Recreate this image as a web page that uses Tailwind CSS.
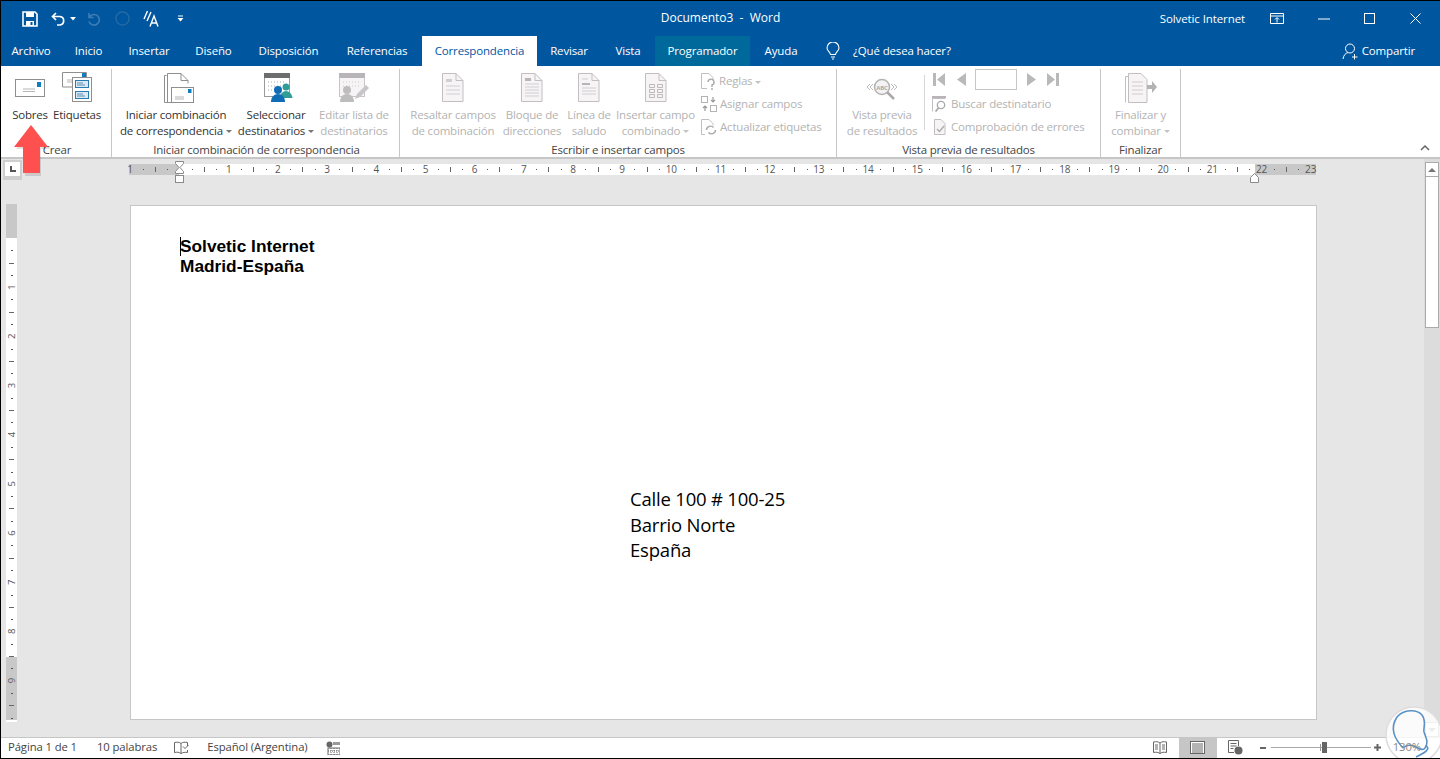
<!DOCTYPE html>
<html lang="es">
<head>
<meta charset="utf-8">
<title>Documento3 - Word</title>
<script src="https://cdn.jsdelivr.net/npm/@tailwindcss/browser@4"></script>
</head>
<body class="overflow-hidden">
<div class="relative w-[1440px] h-[759px] overflow-hidden flex flex-col bg-[#e6e6e6] border-t border-b border-l border-black font-['Open_Sans','Noto_Sans',sans-serif] text-[11.5px] tracking-[-0.2px] text-[#333]">

  <!-- title bar -->
  <header class="h-[35px] shrink-0 bg-[#00569f] text-white grid grid-cols-[1fr_auto_1fr] items-center">
    <div class="flex items-center pl-[21px]">
      <svg width="16" height="16" viewBox="0 0 16 16" class="mr-[13px]"><path d="M1 1h12l2 2v12H1z" fill="none" stroke="#fff" stroke-width="1.6"/><rect x="4" y="1" width="8" height="5" fill="#fff"/><rect x="4" y="10" width="8" height="5" fill="#fff"/><rect x="8.5" y="11" width="2" height="3" fill="#00569f"/></svg>
      <svg width="16" height="14" viewBox="0 0 16 14" class="mr-[3px]"><path d="M5 1L1.5 4.5 5 8M2 4.5h7a4.3 4.3 0 0 1 0 8.5H6" fill="none" stroke="#fff" stroke-width="1.7"/></svg>
      <svg width="6" height="4" viewBox="0 0 6 4" class="mr-[10px]"><path d="M0 0h6L3 3.5z" fill="#fff"/></svg>
      <svg width="14" height="14" viewBox="0 0 14 14" class="mr-[15px]"><path d="M3 1v4.5h4.5M3.500 5A5.300 5.300 0 1 1 3 9.500" fill="none" stroke="#3d7db3" stroke-width="1.6"/></svg>
      <svg width="15" height="15" viewBox="0 0 15 15" class="mr-[13px]"><circle cx="7.5" cy="7.5" r="6.6" fill="none" stroke="#2a6ea6" stroke-width="1.2"/></svg>
      <svg width="16" height="17" viewBox="0 0 16 17" class="mr-[18px]"><path d="M1 9L4.500 1M4 11L8 2M7 16.500L11 6l4 10.500M8.500 13h5" fill="none" stroke="#fff" stroke-width="1.4"/></svg>
      <svg width="7" height="7" viewBox="0 0 7 7"><path d="M1 1h5" stroke="#fff"/><path d="M0.5 3h6L3.5 6.5z" fill="#fff"/></svg>
    </div>
    <div class="text-[12px] tracking-normal pb-[2px]">Documento3 &nbsp;-&nbsp; Word</div>
    <div class="flex items-center justify-end">
      <span class="text-[11.5px] mr-[25px] tracking-[-0.1px]">Solvetic Internet</span>
      <svg width="15" height="12" viewBox="0 0 15 12" class="mr-[33px]"><path d="M.5.5h13v10H.5zM.5 3h13" fill="none" stroke="#fff"/><path d="M7 9.500V5M5 6.500L7 4.500 9 6.500" fill="none" stroke="#fff"/></svg>
      <svg width="12" height="2" viewBox="0 0 12 2" class="mr-[34px]"><path d="M0 1h12" stroke="#fff"/></svg>
      <svg width="11" height="11" viewBox="0 0 11 11" class="mr-[35px]"><rect x=".5" y=".5" width="10" height="10" fill="none" stroke="#fff"/></svg>
      <svg width="11" height="11" viewBox="0 0 11 11" class="mr-[19px]"><path d="M.5.5l10 10M10.500.5l-10 10" stroke="#fff"/></svg>
    </div>
  </header>

  <!-- tabs -->
  <nav class="h-[30px] shrink-0 bg-[#00569f] text-white flex items-center text-[11.5px] tracking-[-0.15px]">
    <div class="w-[60px] text-center">Archivo</div>
    <div class="w-[55px] text-center">Inicio</div>
    <div class="w-[66px] text-center">Insertar</div>
    <div class="w-[63px] text-center">Diseño</div>
    <div class="w-[87px] text-center">Disposición</div>
    <div class="w-[90px] text-center">Referencias</div>
    <div class="w-[115px] h-full flex items-center justify-center bg-white text-[#00569f]">Correspondencia</div>
    <div class="w-[64px] text-center">Revisar</div>
    <div class="w-[54px] text-center">Vista</div>
    <div class="w-[95px] h-full flex items-center justify-center bg-[#00699b]">Programador</div>
    <div class="w-[62px] text-center">Ayuda</div>
    <svg width="14" height="18" viewBox="0 0 14 18" class="ml-[14px] mr-[13px]"><path d="M4.500 12.500C4 9.500 1 9 1 6a6 6 0 0 1 12 0c0 3-3 3.500-3.500 6.500zM5 15h4M6 17h2" fill="none" stroke="#fff" stroke-width="1.100"/></svg>
    <div>¿Qué desea hacer?</div>
    <div class="flex-1"></div>
    <svg width="17" height="17" viewBox="0 0 17 17" class="mr-[3px]"><circle cx="8" cy="5.500" r="4.500" fill="none" stroke="#fff"/><path d="M1 16c.5-3.500 2.500-6 5-6.500M12.500 11v5.500M10 14h5.500" fill="none" stroke="#fff"/></svg>
    <div class="mr-[25px]">Compartir</div>
  </nav>

  <!-- ribbon -->
  <section class="relative h-[93px] shrink-0 bg-white border-b-2 border-[#c6c6c6] flex pt-[3px]">
    <!-- Crear -->
    <div class="w-[111px] shrink-0 flex flex-col border-r border-[#c6c6c6]">
      <div class="flex-1 flex pl-[6px]">
        <div class="w-[46px] flex flex-col items-center">
          <div class="h-[38px] flex items-start justify-center">
            <svg width="30" height="18" viewBox="0 0 30 18" class="mt-[10px]"><rect x=".5" y=".5" width="29" height="17" fill="#fff" stroke="#8f8f8f"/><rect x="22" y="3" width="4" height="5" fill="#0f7ebd"/><path d="M8 10h12M8 12.500h12" stroke="#b5b5b5"/></svg>
          </div>
          <div class="leading-[16px] text-center">Sobres</div>
        </div>
        <div class="w-[48px] flex flex-col items-center">
          <div class="h-[38px] flex items-start justify-center">
            <svg width="31" height="30" viewBox="0 0 31 30" class="mt-[3px]"><path d="M.5 15V.5h24V5" fill="#fff" stroke="#8f8f8f"/><rect x="20" y="1" width="4" height="4" fill="#0f7ebd"/><path d="M5 8h7M5 10h7" stroke="#b5b5b5"/><path d="M.5 15H10" stroke="#8f8f8f"/><rect x="10.500" y="5.500" width="19" height="24" fill="#fff" stroke="#8f8f8f"/><rect x="13.500" y="8.500" width="13" height="7" fill="#dbeaf4" stroke="#2a7bb0"/><rect x="13.500" y="19.500" width="13" height="7" fill="#dbeaf4" stroke="#2a7bb0"/><path d="M15 11h6M15 13h8M15 22h6M15 24h8" stroke="#5b8fb0"/></svg>
          </div>
          <div class="leading-[16px] text-center">Etiquetas</div>
        </div>
      </div>
      <div class="h-[15px] leading-[15px] text-center pl-[2px] text-[#444]">Crear</div>
    </div>
    <!-- Iniciar combinación -->
    <div class="w-[288px] shrink-0 flex flex-col border-r border-[#c6c6c6]">
      <div class="flex-1 flex pl-[4px]">
        <div class="w-[120px] flex flex-col items-center">
          <div class="h-[38px] flex items-start justify-center pl-[6px]">
            <svg width="30" height="31" viewBox="0 0 30 31" class="mt-[4px]"><path d="M.5 29.500V2.500h2M3.500 29.500V.5H17l7 7v3" fill="#fff" stroke="#8f8f8f"/><path d="M17 .5v7h7" fill="none" stroke="#8f8f8f"/><path d="M.5 29.500h7" stroke="#8f8f8f"/><rect x="7.500" y="14.500" width="22" height="15" fill="#fff" stroke="#8f8f8f"/><rect x="24" y="16" width="3.500" height="4" fill="#0f7ebd"/><path d="M11 24h9M11 26h9" stroke="#b5b5b5"/></svg>
          </div>
          <div class="leading-[16px] text-center">Iniciar combinación<br>de correspondencia<span class="inline-block align-middle ml-[3px] w-0 h-0 border-x-[3px] border-x-transparent border-t-[3px] border-t-[#777]"></span></div>
        </div>
        <div class="w-[80px] flex flex-col items-center">
          <div class="h-[38px] flex items-start justify-center pl-[5px]">
            <svg width="30" height="30" viewBox="0 0 30 30" class="mt-[4px]"><rect x=".5" y=".5" width="25" height="23" fill="#fff" stroke="#9a9a9a"/><rect y="0" width="26" height="5" fill="#6d6d6d"/><path d="M4 9h18M4 13h18M4 17h12" stroke="#aaa" stroke-dasharray="1 2"/><circle cx="22" cy="14" r="3.500" fill="#2f9c95"/><path d="M16 25c0-4 3-7 6-7s6 3 6.500 7z" fill="#2f9c95"/><circle cx="14" cy="17" r="4" fill="#0f6cb5"/><path d="M7 29c0-5 3-8 7-8s7 3 7 8z" fill="#0f6cb5"/></svg>
          </div>
          <div class="leading-[16px] text-center">Seleccionar<br>destinatarios<span class="inline-block align-middle ml-[3px] w-0 h-0 border-x-[3px] border-x-transparent border-t-[3px] border-t-[#777]"></span></div>
        </div>
        <div class="w-[76px] flex flex-col items-center text-[#b3b3b3]">
          <div class="h-[38px] flex items-start justify-center">
            <svg width="30" height="30" viewBox="0 0 30 30" class="mt-[4px]"><rect x=".5" y=".5" width="25" height="23" fill="#f7f4f6" stroke="#c9c4c8"/><rect width="26" height="5" fill="#b9b4b8"/><path d="M4 9h18M4 13h18" stroke="#ccc" stroke-dasharray="1 2"/><circle cx="8" cy="17" r="4" fill="#bdbdbd"/><path d="M1 29c0-5 3-8 7-8s7 3 7 8z" fill="#bdbdbd"/><path d="M16 26l2-5 9-9 3 3-9 9z" fill="#c9c4c8"/></svg>
          </div>
          <div class="leading-[16px] text-center">Editar lista de<br>destinatarios</div>
        </div>
      </div>
      <div class="h-[15px] leading-[15px] text-center pl-[2px] text-[#444]">Iniciar combinación de correspondencia</div>
    </div>
    <!-- Escribir e insertar -->
    <div class="w-[437px] shrink-0 flex flex-col border-r border-[#c6c6c6]">
      <div class="flex-1 flex pl-[4px] text-[#b3b3b3]">
        <div class="w-[98px] flex flex-col items-center">
          <div class="h-[38px] flex items-start justify-center">
            <svg width="22" height="29" viewBox="0 0 22 29" class="mt-[4px]"><path d="M.5.5H14l7 7v21H.5z" fill="#f7f4f6" stroke="#c3bec2"/><path d="M14 .5v7h7" fill="none" stroke="#c3bec2"/><path d="M4 6h6v3H4z" fill="#d2cdd1"/><path d="M4 13h14M4 17h14M4 21h14" stroke="#d2cdd1"/></svg>
          </div>
          <div class="leading-[16px] text-center">Resaltar campos<br>de combinación</div>
        </div>
        <div class="w-[60px] flex flex-col items-center">
          <div class="h-[38px] flex items-start justify-center">
            <svg width="22" height="29" viewBox="0 0 22 29" class="mt-[4px]"><path d="M.5.5H14l7 7v21H.5z" fill="#f7f4f6" stroke="#c3bec2"/><path d="M14 .5v7h7" fill="none" stroke="#c3bec2"/><path d="M4 5h6v3H4z" fill="#b9b4b8"/><path d="M4 11h14M4 14h14M4 17h14M4 20h14M4 23h14" stroke="#d2cdd1"/></svg>
          </div>
          <div class="leading-[16px] text-center">Bloque de<br>direcciones</div>
        </div>
        <div class="w-[54px] flex flex-col items-center">
          <div class="h-[38px] flex items-start justify-center">
            <svg width="22" height="29" viewBox="0 0 22 29" class="mt-[4px]"><path d="M.5.5H14l7 7v21H.5z" fill="#f7f4f6" stroke="#c3bec2"/><path d="M14 .5v7h7" fill="none" stroke="#c3bec2"/><path d="M4 10h8v2H4z" fill="#b9b4b8"/><path d="M4 6h6M4 15h14M4 18h14M4 21h14" stroke="#d2cdd1"/></svg>
          </div>
          <div class="leading-[16px] text-center">Línea de<br>saludo</div>
        </div>
        <div class="w-[79px] flex flex-col items-center">
          <div class="h-[38px] flex items-start justify-center">
            <svg width="22" height="29" viewBox="0 0 22 29" class="mt-[4px]"><path d="M.5.5H14l7 7v21H.5z" fill="#f7f4f6" stroke="#c3bec2"/><path d="M14 .5v7h7" fill="none" stroke="#c3bec2"/><path d="M4.500 11.500h5v3h-5zM12.500 11.500h5v3h-5zM4.500 16.500h5v3h-5zM12.500 16.500h5v3h-5zM4.500 21.500h5v3h-5zM12.500 21.500h5v3h-5z" fill="none" stroke="#bdb8bc"/></svg>
          </div>
          <div class="leading-[16px] text-center">Insertar campo<br>combinado<span class="inline-block align-middle ml-[3px] w-0 h-0 border-x-[3px] border-x-transparent border-t-[3px] border-t-[#c3c3c3]"></span></div>
        </div>
        <div class="flex flex-col pl-[6px] pt-[2px] gap-[3px]">
          <div class="h-[20px] flex items-center gap-[3px]">
            <svg width="15" height="17" viewBox="0 0 15 17"><path d="M.5.5H8l4 4v3M.5.5v15H6" fill="none" stroke="#c3bec2"/><path d="M7 9a3 3 0 1 1 4 3v2M11 15v2" fill="none" stroke="#aaa" stroke-width="1.400"/></svg>
            <span>Reglas<span class="inline-block align-middle ml-[3px] w-0 h-0 border-x-[3px] border-x-transparent border-t-[3px] border-t-[#c3c3c3]"></span></span>
          </div>
          <div class="h-[20px] flex items-center gap-[3px]">
            <svg width="16" height="16" viewBox="0 0 16 16"><rect x=".5" y=".5" width="6" height="6" fill="none" stroke="#b3b3b3"/><rect x="9.500" y="9.500" width="6" height="6" fill="none" stroke="#b3b3b3"/><path d="M12 1v5M10 4l2 2 2-2M4 15V10M2 12l2-2 2 2" fill="none" stroke="#9a9a9a" stroke-width="1.200"/></svg>
            <span>Asignar campos</span>
          </div>
          <div class="h-[20px] flex items-center gap-[3px]">
            <svg width="16" height="16" viewBox="0 0 16 16"><path d="M.5 15.500V.5H8l4 4v2M.5 15.500H4" fill="none" stroke="#c3bec2"/><path d="M5.500 11a4 4 0 0 1 7-2.500M14.500 11a4 4 0 0 1-7 2.500" fill="none" stroke="#aaa" stroke-width="1.400"/></svg>
            <span>Actualizar etiquetas</span>
          </div>
        </div>
      </div>
      <div class="h-[15px] leading-[15px] text-center text-[#444]">Escribir e insertar campos</div>
    </div>
    <!-- Vista previa -->
    <div class="w-[264px] shrink-0 flex flex-col border-r border-[#c6c6c6]">
      <div class="flex-1 flex pl-[3px] text-[#b3b3b3]">
        <div class="w-[84px] flex flex-col items-center">
          <div class="h-[38px] flex items-start justify-center">
            <svg width="32" height="24" viewBox="0 0 32 24" class="mt-[9px]"><circle cx="16" cy="9" r="7.500" fill="#f4f2f3" stroke="#b3b3b3" stroke-width="1.500"/><path d="M21 14l7 7" stroke="#aaa" stroke-width="2.500"/><path d="M4 6L1 9l3 3M7 6L4 9l3 3M25 6l3 3-3 3M28 6l3 3-3 3" fill="none" stroke="#bbb"/><text x="16" y="11.500" text-anchor="middle" font-size="6" font-weight="700" fill="#aaa">ABC</text></svg>
          </div>
          <div class="leading-[16px] text-center">Vista previa<br>de resultados</div>
        </div>
        <div class="w-px h-[55px] mt-[6px] bg-[#d8d8d8]"></div>
        <div class="flex flex-col pl-[6px] gap-[3px]">
          <div class="h-[21px] flex items-center">
            <svg width="128" height="21" viewBox="0 0 128 21"><path d="M2 4h3v13H2zM14 4v13L6 10.500z" fill="#b9b9b9"/><path d="M35 4v13l-9-6.500zM96 4v13l9-6.500zM116 4v13l8-6.500zM125 4h3v13h-3z" fill="#b9b9b9"/><rect x="44.500" y=".5" width="41" height="20" fill="#fff" stroke="#c6c6c6"/></svg>
          </div>
          <div class="h-[20px] mt-[1px] pl-[1px] flex items-center gap-[3px]">
            <svg width="16" height="16" viewBox="0 0 16 16"><path d="M.5 2.500h13M.5 2.500v13" stroke="#c3bec2" fill="none"/><path d="M0 0h14v2H0z" fill="#b9b4b8"/><circle cx="9" cy="9" r="3.700" fill="none" stroke="#a9a9a9" stroke-width="1.300"/><path d="M6.500 12l-3 3.500" stroke="#a9a9a9" stroke-width="1.800"/></svg>
            <span>Buscar destinatario</span>
          </div>
          <div class="h-[20px] pl-[1px] flex items-center gap-[3px]">
            <svg width="16" height="16" viewBox="0 0 16 16"><path d="M2.500 15.500V.5H9l4 4v11z" fill="#f7f4f6" stroke="#c3bec2"/><path d="M5 10l2.500 2.500L12 7" fill="none" stroke="#aaa" stroke-width="1.300"/></svg>
            <span>Comprobación de errores</span>
          </div>
        </div>
      </div>
      <div class="h-[15px] leading-[15px] text-center text-[#444]">Vista previa de resultados</div>
    </div>
    <!-- Finalizar -->
    <div class="w-[80px] shrink-0 flex flex-col border-r border-[#c6c6c6]">
      <div class="flex-1 flex text-[#b3b3b3]">
        <div class="w-full flex flex-col items-center">
          <div class="h-[38px] flex items-start justify-center">
            <svg width="32" height="30" viewBox="0 0 32 30" class="mt-[4px]"><path d="M.5 29.500V3.500h3" fill="none" stroke="#c3bec2"/><path d="M3.500 29.500V.5H16l6 6v23z" fill="#f7f4f6" stroke="#c3bec2"/><path d="M7 9h11M7 13h11M7 17h11M7 21h11" stroke="#cfcacd"/><path d="M22 12h5V8l5 6-5 6v-4h-5z" fill="#b3b3b3"/></svg>
          </div>
          <div class="leading-[16px] text-center">Finalizar y<br>combinar<span class="inline-block align-middle ml-[3px] w-0 h-0 border-x-[3px] border-x-transparent border-t-[3px] border-t-[#c3c3c3]"></span></div>
        </div>
      </div>
      <div class="h-[15px] leading-[15px] text-center text-[#444]">Finalizar</div>
    </div>
    <svg width="10" height="6" viewBox="0 0 10 6" class="absolute left-[1419px] top-[79px]"><path d="M1 5l4-4 4 4" fill="none" stroke="#666" stroke-width="1.500"/></svg>
  </section>

  <!-- work area -->
  <main class="flex-1 min-h-0 flex">
    <div class="w-[1422px] shrink-0 flex flex-col">
      <div class="h-[46px] shrink-0 flex items-start">
        <div class="w-[19px] h-[20px] ml-[2px] mt-[1px] bg-[#cfcfcf] flex items-start justify-center">
          <div class="w-[15px] h-[14px] mt-[2px] bg-white flex items-center justify-center">
            <div class="w-[6px] h-[6px] border-l-2 border-b-2 border-[#555]"></div>
          </div>
        </div>
        <svg id="hr" width="1195" height="30" viewBox="125 159 1195 30" class="ml-[103px] overflow-visible font-['Open_Sans',sans-serif]"></svg>
      </div>
      <div class="flex-1 min-h-0 flex items-start">
        <svg id="vr" width="13" height="520" viewBox="5 204 13 520" class="ml-[4px] mt-[-1px] shrink-0"></svg>
        <article class="relative ml-[112px] w-[1187px] h-[515px] bg-white border border-[#c6c6c6] text-black tracking-normal">
          <div class="absolute left-[49px] top-[31px] w-px h-[19px] bg-black"></div>
          <div class="pl-[49px] pt-[30px] font-['Liberation_Sans',sans-serif] font-bold text-[17.3px] leading-[20px]">
            <div>Solvetic Internet</div>
            <div>Madrid-España</div>
          </div>
          <div class="pl-[499px] pt-[210px] text-[18.5px] leading-[25.5px] font-['Open_Sans',sans-serif] tracking-[-0.2px]">
            <div>Calle 100 # 100-25</div>
            <div>Barrio Norte</div>
            <div>España</div>
          </div>
        </article>
      </div>
    </div>
    <div class="w-[17px] shrink-0 bg-[#dcdcdc] border-l border-[#e6e6e6] flex flex-col items-stretch pt-[3px] px-px">
      <div class="h-[15px] bg-white border border-[#ababab] flex items-center justify-center shrink-0">
        <div class="w-0 h-0 border-x-[4px] border-x-transparent border-b-[4px] border-b-[#777]"></div>
      </div>
      <div class="h-[152px] mt-[-1px] bg-white border border-[#ababab] shrink-0"></div>
      <div class="flex-1"></div>
      <div class="h-[15px] bg-white border border-[#ababab] flex items-center justify-center shrink-0">
        <div class="w-0 h-0 border-x-[4px] border-x-transparent border-t-[4px] border-t-[#999]"></div>
      </div>
    </div>
  </main>

  <!-- status bar -->
  <footer class="h-[21px] shrink-0 bg-white border-t border-[#c6c6c6] flex items-center text-[#444] text-[11.3px] tracking-[-0.1px] pb-[1px]">
    <span class="ml-[7px]">Página 1 de 1</span>
    <span class="ml-[20px]">10 palabras</span>
    <svg width="15" height="14" viewBox="0 0 15 14" class="ml-[17px]"><path d="M7 2.500C5.500 1 3 1 .5 1.500v10c2.500-.5 4.500-.5 6.500 1M7 2.500v10M7 2.500C8.500 1 11 1 13.500 1.500V5M7 12.500c1.500-1 4-1.500 6.500-1V9" fill="none" stroke="#666"/><path d="M9 5.500l2 2L14.500 4" fill="none" stroke="#666"/></svg>
    <span class="ml-[18px] mr-[-1px]">Español (Argentina)</span>
    <svg width="14" height="14" viewBox="0 0 14 14" class="ml-[19px]"><circle cx="3.500" cy="3.500" r="3" fill="#666"/><rect x="7" y="1" width="7" height="3" fill="#999"/><rect x="2" y="7" width="12" height="7" fill="none" stroke="#666"/><path d="M2 10h12M5 7v7M8 7v7M11 7v7" stroke="#666" stroke-dasharray="1 1"/></svg>
    <div class="flex-1"></div>
    <svg width="14" height="13" viewBox="0 0 14 13" class="mr-[12px]"><path d="M7 2C5 .5 3 .5.500 1v10.500C3 11 5 11 7 12.500 9 11 11 11 13.500 11.500V1C11 .5 9 .5 7 2zM7 2v10.500M2 4h3M2 6h3M2 8h3M9 4h3M9 6h3M9 8h3" fill="none" stroke="#666"/></svg>
    <div class="w-[38px] h-[21px] bg-[#c6c6c6] flex items-center justify-center">
      <svg width="15" height="13" viewBox="0 0 15 13"><rect x=".5" y=".5" width="14" height="12" fill="#fff" stroke="#666"/><path d="M2 3h11M2 5h11M2 7h11M2 9h11M2 11h11" stroke="#666"/></svg>
    </div>
    <svg width="15" height="15" viewBox="0 0 15 15" class="ml-[11px]"><path d="M10.500 6V.5H.5v12H6M2.500 3.500h6M2.500 6h6M2.500 8.500h3" fill="#fff" stroke="#666"/><circle cx="10.500" cy="10.500" r="4" fill="#666"/></svg>
    <div class="w-[6px] h-[2px] bg-[#666] ml-[17px]"></div>
    <div class="relative w-[100px] h-px bg-[#aaa] ml-[5px]">
      <div class="absolute left-[49px] top-[-3px] w-px h-[7px] bg-[#999]"></div>
      <div class="absolute left-[51px] top-[-5px] w-[5px] h-[11px] bg-[#666]"></div>
    </div>
    <svg width="7" height="7" viewBox="0 0 7 7" class="ml-[3px]"><path d="M3.500 0v7M0 3.500h7" stroke="#666" stroke-width="2"/></svg>
    <span class="relative z-10 ml-[12px] mr-[19px] text-[#8a8a8a]">130%</span>
  </footer>

  <!-- red arrow -->
  <svg width="40" height="52" viewBox="0 0 40 52" class="absolute left-[11px] top-[124px]"><path d="M4 24l17-22 17 22h-9v27H13V24z" fill="#000" opacity=".12"/><path d="M2 22L19 0l17 22h-8v26H11V22z" fill="#ff5050"/></svg>

  <!-- watermark -->
  <svg width="60" height="60" viewBox="0 0 60 60" class="absolute left-[1383px] top-[704px]"><circle cx="30" cy="30" r="28" fill="#fff" fill-opacity=".82" stroke="#ddd" stroke-width="1.500"/><path d="M19 43C11 34 5 24 13 12 20 4 33 4 38 10c5 7 1 12 2 17 2 6 5 10 1 16-1 2-5 2-9-1-4-3-10-2-13 1" fill="none" stroke="#5a92c6" stroke-width="1.600"/><path d="M32 52c4-2 9-4 11-7 2-2 0-4-2-4" fill="none" stroke="#5a92c6" stroke-width="1.600"/></svg>
</div>
<script>
(function(){
  var NS='http://www.w3.org/2000/svg';
  function el(p,n,a,t){var e=document.createElementNS(NS,n);for(var k in a)e.setAttribute(k,a[k]);if(t!=null)e.textContent=t;p.appendChild(e);return e;}
  var hr=document.getElementById('hr');
  el(hr,'rect',{x:129,y:164,width:1187,height:11,fill:'#fff'});
  el(hr,'rect',{x:129,y:164,width:50,height:11,fill:'#c8c8c8'});
  el(hr,'rect',{x:1255,y:164,width:61,height:11,fill:'#c8c8c8'});
  var u=49.18,o=179.5,q;
  for(q=-3;q<=93;q++){
    var x=o+q*u/4;
    if(x>1316||x<129)continue;
    var m=((q%4)+4)%4;
    if(m===0){
      var n=Math.abs(q/4);
      if(n>0)el(hr,'text',{x:x,y:173,'text-anchor':'middle','font-size':'10',fill:'#555','font-family':'Open Sans'},String(n));
    } else if(m===2){
      el(hr,'rect',{x:Math.round(x),y:167,width:1,height:5,fill:'#666'});
    } else {
      el(hr,'rect',{x:Math.round(x),y:169,width:1,height:1,fill:'#555'});
    }
  }
  el(hr,'text',{x:130,y:173,'text-anchor':'middle','font-size':'10',fill:'#555','font-family':'Open Sans'},'1');
  el(hr,'path',{d:'M175.500 161.500h8v2l-3.500 4 3.500 4v2h-8v-2l3.500-4-3.500-4z',fill:'#fff',stroke:'#8a8a8a'});
  el(hr,'rect',{x:175.5,y:175.5,width:8,height:7,fill:'#fff',stroke:'#8a8a8a'});
  el(hr,'path',{d:'M1250.500 182.500v-5l4-4 4 4v5z',fill:'#fff',stroke:'#8a8a8a'});

  var vr=document.getElementById('vr');
  el(vr,'rect',{x:6,y:204,width:11,height:518,fill:'#fff'});
  el(vr,'rect',{x:6,y:204,width:11,height:34,fill:'#c8c8c8'});
  el(vr,'rect',{x:6,y:657,width:11,height:63,fill:'#c8c8c8'});
  var v0=238;
  for(q=1;q<=39;q++){
    var y=v0+q*u/4;
    if(y>718)break;
    var r=q%4;
    if(r===0){
      var yy=y.toFixed(1);
      el(vr,'text',{x:11.5,y:yy,transform:'rotate(-90 11.5 '+yy+')','text-anchor':'middle','dominant-baseline':'central','font-size':'9.5',fill:'#555','font-family':'Open Sans'},String(q/4));
    } else if(r===2){
      el(vr,'rect',{x:9,y:Math.round(y),width:5,height:1,fill:'#666'});
    } else {
      el(vr,'rect',{x:11,y:Math.round(y),width:2,height:1,fill:'#555'});
    }
  }
})();
</script>
</body>
</html>
